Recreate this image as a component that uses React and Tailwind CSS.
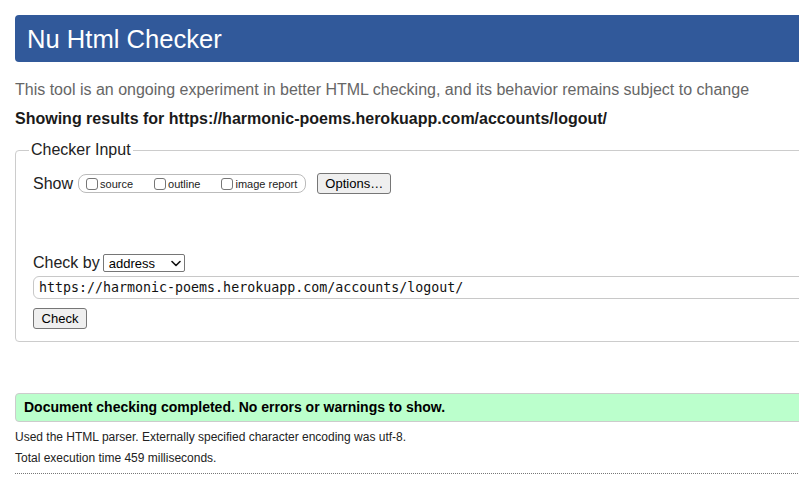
import React from "react";

function Box({ label }) {
  return (
    <span className="flex items-center gap-[2px]">
      <span className="block w-[12px] h-[12px] rounded-[3px] border border-[#767676] bg-white" />
      <span className="text-[11px] leading-[14px] text-[#222]">{label}</span>
    </span>
  );
}

export default function App() {
  return (
    <div className="w-[799px] h-[492px] overflow-hidden bg-white text-[#222]" style={{ fontFamily: '"Liberation Sans", Arial, sans-serif' }}>
      <div className="w-[1000px] pl-[15px] pt-[15px]">
        <header className="h-[47px] rounded-[4px] bg-[#31599a] flex items-center pl-[12px]">
          <h1 className="text-white text-[25.6px] leading-[30px] font-normal">Nu Html Checker</h1>
        </header>

        <p className="mt-[18px] text-[16px] leading-[20px] text-[#666]">
          This tool is an ongoing experiment in better HTML checking, and its behavior remains subject to change
        </p>
        <p className="mt-[9px] text-[16px] leading-[20px] font-bold text-[#1a1a1a]">
          Showing results for https://harmonic-poems.herokuapp.com/accounts/logout/
        </p>

        <fieldset className="mt-[11px] border border-[#ccc] rounded-[4px] pl-[13px] pb-[12px]">
          <legend className="px-[2px] text-[16px] leading-[20px] text-[#222]">Checker Input</legend>
          <div className="ml-[4px]">
            <div className="mt-[13px] flex items-center h-[21px]">
              <span className="text-[16px] leading-[20px] mr-[5px]">Show</span>
              <div className="flex items-center gap-[21px] h-[19px] border border-[#bbb] rounded-[8px] pl-[7px] pr-[8px]">
                <Box label="source" />
                <Box label="outline" />
                <Box label="image report" />
              </div>
              <button className="ml-[11px] w-[74px] h-[21px] border border-[#767676] rounded-[3px] bg-[#efefef] text-[13px] leading-[15px] text-black flex items-center justify-center">
                Options…
              </button>
            </div>

            <div className="mt-[59px] flex items-center h-[20px]">
              <span className="text-[16px] leading-[20px] mr-[3px]">Check by</span>
              <div className="w-[82px] h-[18px] border border-[#767676] rounded-[2px] bg-white flex items-center justify-between pl-[5px] pr-[3px]">
                <span className="text-[13px] leading-[15px] text-black">address</span>
                <svg width="10" height="7" viewBox="0 0 10 7" className="mt-[1px]">
                  <path d="M1 1.5 L5 5.5 L9 1.5" fill="none" stroke="#111" strokeWidth="1.6" strokeLinecap="round" strokeLinejoin="round" />
                </svg>
              </div>
            </div>

            <div className="mt-[3px] h-[23px] w-[900px] border border-[#c8c8c8] rounded-[6px] flex items-center pl-[5px]">
              <span className="text-[13.3px] leading-[16px] text-[#111]" style={{ fontFamily: '"DejaVu Sans Mono", monospace' }}>
                https://harmonic-poems.herokuapp.com/accounts/logout/
              </span>
            </div>

            <button className="mt-[9px] w-[54px] h-[21px] border border-[#767676] rounded-[3px] bg-[#efefef] text-[13px] leading-[15px] text-black flex items-center justify-center">
              Check
            </button>
          </div>
        </fieldset>

        <div className="mt-[51px] h-[29px] border border-[#ccc] rounded-[4px] bg-[#bfc] flex items-center pl-[8px]">
          <span className="text-[14px] leading-[17px] font-bold text-black">
            Document checking completed. No errors or warnings to show.
          </span>
        </div>

        <p className="mt-[8px] text-[12px] leading-[14px] text-[#222]">
          Used the HTML parser. Externally specified character encoding was utf-8.
        </p>
        <p className="mt-[7px] text-[12px] leading-[14px] text-[#222]">Total execution time 459 milliseconds.</p>
        <div className="mt-[8px] border-b border-dotted border-[#777]" />
      </div>
    </div>
  );
}
